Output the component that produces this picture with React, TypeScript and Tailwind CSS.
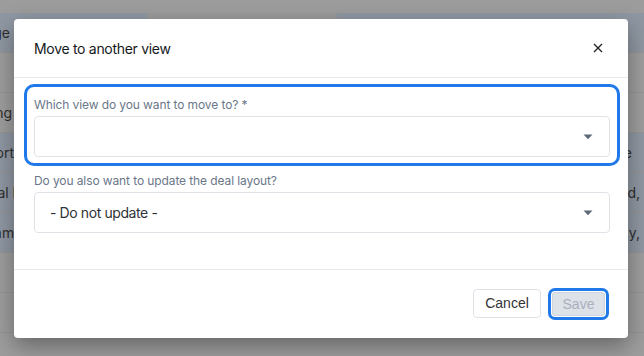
const rows = [
  { left: "Stage", leftShift: "justify-end w-[10px]", right: "", tone: "blue", mid: true },
  { left: "", leftShift: "", right: "", tone: "gray" },
  { left: "Closing", leftShift: "justify-end w-[12px]", right: "", tone: "gray" },
  { left: "Report", leftShift: "-ml-[30px]", right: "New Feature", rightPad: "pr-[12px]", tone: "blue" },
  { left: "Deal Pipeline", leftShift: "-ml-[21px]", right: "Cloud,", rightPad: "pr-[4px]", tone: "blue" },
  { left: "Comments", leftShift: "-ml-[29px]", right: "Capacity,", rightPad: "pr-[4px]", tone: "blue" },
  { left: "", leftShift: "", right: "", tone: "gray" },
  { left: "", leftShift: "", right: "", tone: "gray" },
  { left: "", leftShift: "", right: "", tone: "gray" },
];

const Caret = () => (
  <svg width="10" height="6" viewBox="0 0 10 6" className="shrink-0">
    <path d="M0.5 0.5 L9.5 0.5 L5 5.2 Z" fill="#5d6878" />
  </svg>
);

const App = () => {
  return (
    <div
      className="relative w-[644px] h-[356px] overflow-hidden bg-[#9c9c9c]"
      style={{ fontFamily: "Inter, 'Noto Sans', sans-serif" }}
    >
      {/* page behind the overlay */}
      <div className="flex flex-col pt-[13px]">
        {rows.map((row, i) => (
          <div
            key={i}
            className={`flex h-[40px] items-center border-b border-[#959595] text-[14px] text-[#2e2e2e] ${
              row.tone === "blue" ? "bg-[#8f97a2]" : "bg-[#9d9d9d]"
            }`}
          >
            <div className="w-[60px] overflow-hidden">
              <div className={`flex whitespace-nowrap ${row.leftShift}`}>{row.left}</div>
            </div>
            {row.mid && <div className="ml-[87px] h-full w-[190px] bg-[#9a9a9a]" />}
            <div className="ml-auto w-[80px] overflow-hidden">
              <div className={`flex justify-end whitespace-nowrap ${row.rightPad ?? ""}`}>
                {row.right}
              </div>
            </div>
          </div>
        ))}
      </div>

      {/* Modal */}
      <div className="absolute left-[14px] top-[19px] flex h-[319px] w-[614px] flex-col rounded-[4px] bg-white shadow-[0_8px_22px_rgba(0,0,0,0.35)]">
        {/* Header */}
        <div className="flex h-[59px] items-center justify-between border-b border-[#e7eaee] pl-5 pr-[25px]">
          <h2 className="text-[14px] font-normal tracking-[-0.3px] text-[#15181c]">
            Move to another view
          </h2>
          <svg width="10" height="10" viewBox="0 0 10 10">
            <path d="M1 1 L9 9 M9 1 L1 9" stroke="#222" strokeWidth="1.3" />
          </svg>
        </div>

        {/* Body */}
        <div className="flex flex-1 flex-col">
          <div className="ml-[10px] mr-[8px] mt-[6px] rounded-[10px] border-[3px] border-[#1f79e8] px-[7px] pb-[6px] pt-[9px]">
            <label className="block h-[18px] text-[12px] leading-[18px] tracking-[-0.1px] text-[#6b7789]">
              Which view do you want to move to? *
            </label>
            <div className="mt-[2px] flex h-[41px] items-center justify-end rounded-[4px] border border-[#dfe3e8] pr-[16px]">
              <Caret />
            </div>
          </div>

          <div className="ml-5 mr-[18px] mt-[6px]">
            <label className="block h-[18px] text-[12px] leading-[18px] tracking-[-0.1px] text-[#6b7789]">
              Do you also want to update the deal layout?
            </label>
            <div className="mt-[2px] flex h-[41px] items-center justify-between rounded-[4px] border border-[#dfe3e8] pl-[15px] pr-[16px]">
              <span className="text-[14px] tracking-[-0.4px] text-[#2f3339]">- Do not update -</span>
              <Caret />
            </div>
          </div>
        </div>

        {/* Footer */}
        <div
          className="flex h-[69px] items-start justify-end gap-[11px] border-t border-[#e7eaee] pr-[23px] pt-[19px]"
          style={{ fontFamily: "'Liberation Sans', Arial, sans-serif" }}
        >
          <button className="h-[29px] w-[68px] rounded-[4px] border border-[#dfe3e8] bg-white text-[14px] text-[#333]">
            Cancel
          </button>
          <button className="mt-[3px] h-[24px] w-[53px] rounded-[3px] border border-[#cfd5de] bg-[#dde1e8] text-[14px] text-[#a9b0bc] outline-[3px] outline-offset-[1px] outline-solid outline-[#1f79e8]">
            Save
          </button>
        </div>
      </div>
    </div>
  );
};

export default App;
